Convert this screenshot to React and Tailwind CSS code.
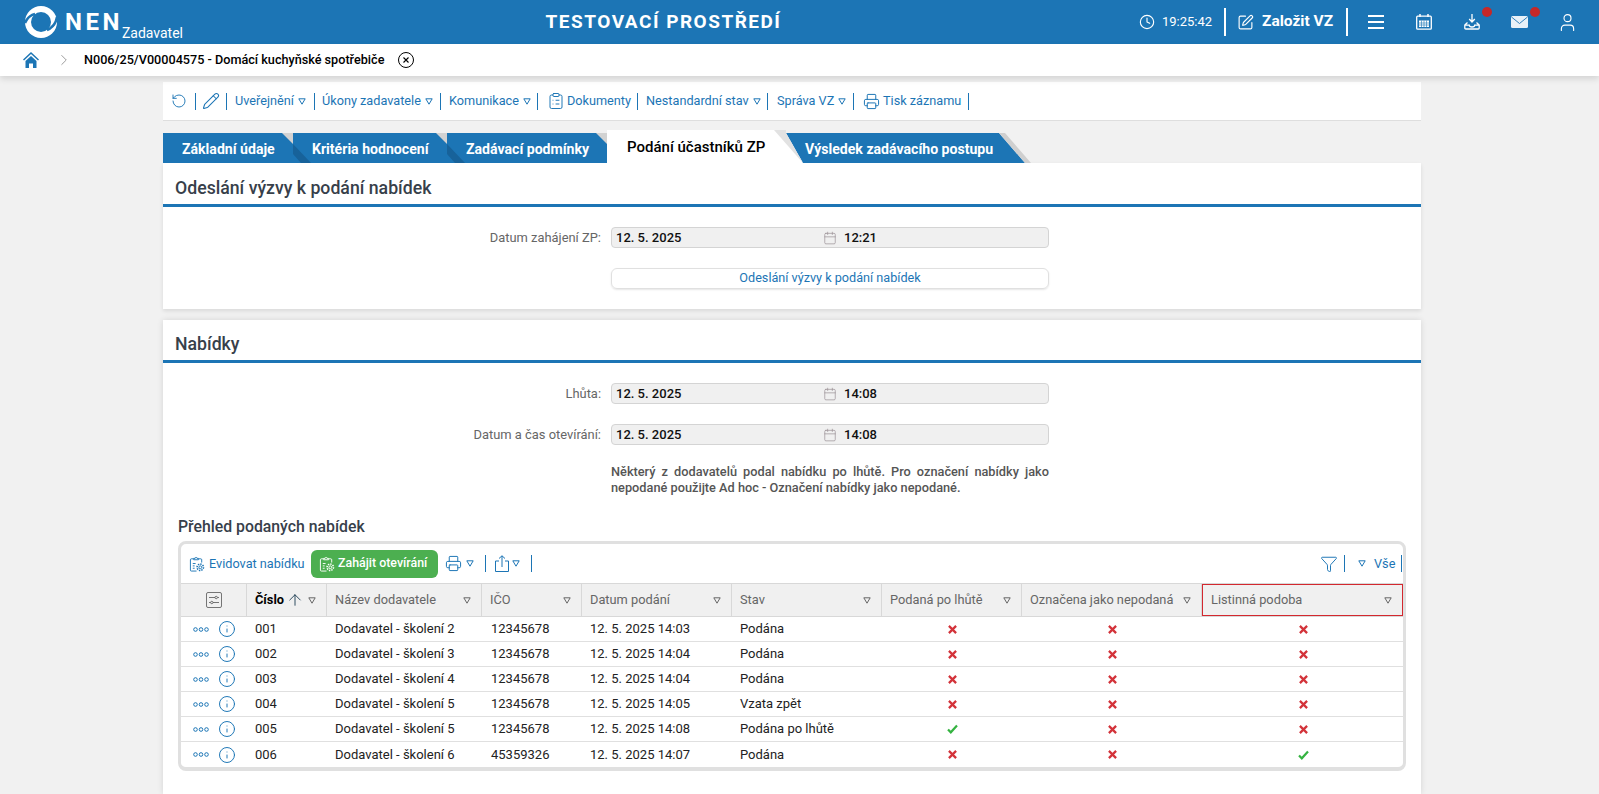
import { ArrowUp, Calendar, ChevronRight, ClipboardList, Clock, Filter, Info, Pencil, Printer, RotateCcw, SquarePen, User } from "lucide-react";

const blue = "text-[#1c75b5]";

const cols = [
  { label: "Číslo", w: "w-[80px]" },
  { label: "Název dodavatele", w: "w-[155px]" },
  { label: "IČO", w: "w-[100px]" },
  { label: "Datum podání", w: "w-[150px]" },
  { label: "Stav", w: "w-[150px]" },
  { label: "Podaná po lhůtě", w: "w-[140px]" },
  { label: "Označena jako nepodaná", w: "w-[180px]" },
  { label: "Listinná podoba", w: "flex-1" },
];

const rows = [
  ["001", "Dodavatel - školení 2", "12345678", "12. 5. 2025 14:03", "Podána", false, false, false],
  ["002", "Dodavatel - školení 3", "12345678", "12. 5. 2025 14:04", "Podána", false, false, false],
  ["003", "Dodavatel - školení 4", "12345678", "12. 5. 2025 14:04", "Podána", false, false, false],
  ["004", "Dodavatel - školení 5", "12345678", "12. 5. 2025 14:05", "Vzata zpět", false, false, false],
  ["005", "Dodavatel - školení 5", "12345678", "12. 5. 2025 14:08", "Podána po lhůtě", true, false, false],
  ["006", "Dodavatel - školení 6", "45359326", "12. 5. 2025 14:07", "Podána", false, false, true],
];

function Tri({ className = "text-[#1c75b5]" }) {
  return (
    <svg viewBox="0 0 8 7" className={`w-[8px] h-[7px] shrink-0 ${className}`} fill="none" stroke="currentColor" strokeWidth="1">
      <path d="M.8.8h6.400L4 6.200z" />
    </svg>
  );
}

function Sep({ className = "" }) {
  return <div className={`w-px h-[17px] bg-[#1c75b5] shrink-0 ${className}`} />;
}

function Logo() {
  return (
    <svg viewBox="0 0 32 32" className="w-[32px] h-[32px]">
      <circle cx="16" cy="16" r="16" fill="white" />
      <circle cx="16" cy="16" r="10" fill="#1c75b5" />
      <path d="M0 17C2 12 6 9 10 8" stroke="#1c75b5" strokeWidth="2.500" fill="none" />
      <path d="M32 11C31 17 27 22 22 24" stroke="#1c75b5" strokeWidth="2.500" fill="none" />
    </svg>
  );
}

function GearClipboard({ className }) {
  return (
    <svg viewBox="0 0 17 17" className={className} fill="none" stroke="currentColor" strokeWidth="1">
      <path d="M5 3H2.500a1 1 0 0 0-1 1v11a1 1 0 0 0 1 1H8M10 3h2.500a1 1 0 0 1 1 1v3" />
      <path d="M5 4V2.500h1.500a1 1 0 0 1 2 0H10V4z" />
      <path d="M4 8h3M4 10.500h2M4 13h2" />
      <circle cx="12" cy="12" r="1.500" />
      <circle cx="12" cy="12" r="3.400" strokeDasharray="1.500 1.100" strokeWidth="1.700" />
    </svg>
  );
}

function DateField({ date, time }) {
  return (
    <div className="w-[438px] h-[21px] bg-[#f0f0f0] border border-[#d4d4d4] rounded-[4px] flex items-center pl-[4px] text-[13px] font-medium text-[#111]">
      <span className="w-[207px]">{date}</span>
      <Calendar className="w-[14px] h-[14px] text-[#9a8f95]" strokeWidth={1.2} />
      <span className="ml-[7px]">{time}</span>
    </div>
  );
}

function FormRow({ label, date, time, className = "" }) {
  return (
    <div className={`flex items-center ${className}`}>
      <div className="w-[438px] mr-[10px] text-right text-[12.900px] text-[#666]">{label}</div>
      <DateField date={date} time={time} />
    </div>
  );
}

function SectionHead({ title, className }) {
  return (
    <div className={`${className} border-b-[3px] border-[#1c75b5] px-[12px] flex items-center text-[17.700px] font-medium text-[#37404a]`}>
      {title}
    </div>
  );
}

function Mark({ ok }) {
  if (ok) {
    return (
      <svg viewBox="0 0 11 10" className="w-[11px] h-[10px]" fill="none" stroke="#35b341" strokeWidth="2.200">
        <path d="M1 5.500 3.800 8.300 10 1.500" />
      </svg>
    );
  }
  return (
    <svg viewBox="0 0 10 10" className="w-[9px] h-[9px]" fill="none" stroke="#d3333a" strokeWidth="2.500">
      <path d="M1 1 9 9M9 1 1 9" />
    </svg>
  );
}

function BlueTab({ label, w, stripe = true }) {
  return (
    <div className={`${w} relative h-[30px] bg-[#1c75b5] flex items-center pl-[19px] pt-[3px] text-[14.100px] font-bold text-white whitespace-nowrap shrink-0`}>
      {label}
      <svg viewBox="0 0 29 30" className="absolute top-0 -right-[18px] w-[29px] h-[30px] z-10">
        <polygon points="0,0 11,0 11,11" fill="#d2d2d2" />
        {stripe && <polygon points="11,11 29,30 19,30 11,21" fill="#17629a" />}
      </svg>
    </div>
  );
}

function ActiveTab() {
  return (
    <div className="w-[179px] relative h-[33px] bg-white flex items-center pl-[20px] pt-[2px] text-[15px] font-medium text-black whitespace-nowrap shrink-0">
      Podání účastníků ZP
      <svg viewBox="0 0 29 33" className="absolute top-0 -right-[17px] w-[29px] h-[33px] z-10">
        <polygon points="12,3 29,33 12,33" fill="white" />
        <polygon points="0,0 12,0 12,3 29,33" fill="#e2e2e2" />
      </svg>
    </div>
  );
}

function LastTab() {
  return (
    <div className="w-[245px] relative h-[30px] shrink-0">
      <div className="w-[239px] h-[30px] bg-[#1c75b5] flex items-center pl-[19px] pt-[3px] pr-[30px] text-[14.100px] font-bold text-white whitespace-nowrap [clip-path:polygon(0_0,calc(100%-26px)_0,100%_100%,0_100%)]">
        Výsledek zadávacího postupu
      </div>
      <svg viewBox="0 0 32 30" className="absolute top-0 right-0 w-[32px] h-[30px]">
        <polygon points="0,0 6,0 32,30 26,30" fill="#cfcfcf" />
      </svg>
    </div>
  );
}

export default function App() {
  return (
    <div className="w-[1599px] h-[794px] overflow-hidden bg-[#f1f1f1] font-['Roboto',sans-serif]">
      <div className="h-[44px] bg-[#1c75b5] flex items-center text-white">
        <div className="flex items-center pl-[25px] w-[500px]">
          <Logo />
          <span className="ml-[8px] text-[24px] font-bold tracking-[3.500px] leading-none">NEN</span>
          <span className="text-[14px] mt-[22px] -ml-[1px] leading-none">Zadavatel</span>
        </div>
        <div className="w-[327px] text-center text-[19px] font-bold tracking-[1.500px] whitespace-nowrap">TESTOVACÍ PROSTŘEDÍ</div>
        <div className="ml-auto flex items-center h-full">
          <Clock className="w-[16px] h-[16px]" strokeWidth={1.7} />
          <span className="ml-[7px] text-[13px] w-[50px] whitespace-nowrap">19:25:42</span>
          <div className="w-[2px] h-[28px] bg-white ml-[12px]" />
          <SquarePen className="w-[17px] h-[17px] ml-[11px]" strokeWidth={1.6} />
          <span className="ml-[8px] text-[15.500px] font-bold w-[72px] whitespace-nowrap">Založit VZ</span>
          <div className="w-[2px] h-[28px] bg-white ml-[12px]" />
          <div className="w-[16px] ml-[20px] flex flex-col gap-[4px]">
            <div className="h-[2px] bg-white" />
            <div className="h-[2px] bg-white" />
            <div className="h-[2px] bg-white" />
          </div>
          <svg viewBox="0 0 16 16" className="w-[16px] h-[16px] ml-[32px]" fill="none" stroke="white">
            <rect x="0.700" y="2.200" width="14.600" height="13" rx="1" strokeWidth="1.300" />
            <path d="M4 0v3M12 0v3" strokeWidth="1.500" />
            <path d="M3 6.500h10v6.500H3z" fill="white" stroke="none" />
            <path d="M3 9h10M3 11h10M5.500 6.500v6.500M8 6.500v6.500M10.500 6.500v6.500" stroke="#1c75b5" strokeWidth="0.600" />
          </svg>
          <div className="relative ml-[32px]">
            <svg viewBox="0 0 16 16" className="w-[16px] h-[16px]" fill="none" stroke="white" strokeWidth="1.300">
              <path d="M8 0v7.500M5.200 5 8 8l2.800-3" />
              <path d="M3.500 8.500 .8 11v3a1 1 0 0 0 1 1h12.400a1 1 0 0 0 1-1v-3l-2.700-2.500M.8 11.200h4.500a2.700 1.800 0 0 0 5.400 0h4.500" />
            </svg>
            <div className="absolute -top-[7px] left-[18px] w-[10px] h-[10px] rounded-full bg-[#c62828]" />
          </div>
          <div className="relative ml-[31px]">
            <svg viewBox="0 0 17 12" className="w-[17px] h-[12px]">
              <rect width="17" height="12" rx="1.500" fill="#e8f1f8" />
              <path d="M.5 1 8.500 7.500 16.500 1" fill="none" stroke="#1c75b5" strokeWidth="0.900" />
            </svg>
            <div className="absolute -top-[9px] left-[19px] w-[10px] h-[10px] rounded-full bg-[#c62828]" />
          </div>
          <User className="w-[21px] h-[21px] ml-[29px] mr-[21px]" strokeWidth={1.3} />
        </div>
      </div>

      <div className="h-[32px] bg-white shadow-[0_3px_6px_rgba(0,0,0,0.12)] flex items-center relative">
        <svg viewBox="0 0 16 16" className="w-[16px] h-[16px] ml-[23px] text-[#1c75b5]" fill="currentColor">
          <path d="M8 0 0 7.500l1 1L8 2l7 6.500 1-1zM2.500 9 8 4l5.500 5v7H10v-4.500H6V16H2.500z" />
        </svg>
        <ChevronRight className="w-[18px] h-[18px] ml-[16px] text-[#888]" strokeWidth={1.1} />
        <span className="ml-[11px] w-[301px] text-[12.650px] font-medium text-black whitespace-nowrap">N006/25/V00004575 - Domácí kuchyňské spotřebiče</span>
        <div className="ml-[13px] w-[16px] h-[16px] rounded-full border border-black flex items-center justify-center">
          <svg viewBox="0 0 6 6" className="w-[6px] h-[6px]" stroke="black" strokeWidth="1.100">
            <path d="M.5.5l5 5M5.500.5l-5 5" />
          </svg>
        </div>
      </div>

      <div className="w-[1258px] ml-[163px] mt-[6px]">
        <div className={`h-[39px] bg-white border-b border-[#dedede] flex items-center pl-[8px] text-[12.700px] ${blue} whitespace-nowrap`}>
          <RotateCcw className="w-[16px] h-[16px]" strokeWidth={1.4} />
          <Sep className="ml-[8px]" />
          <Pencil className="w-[18px] h-[18px] ml-[6px]" strokeWidth={1.4} />
          <Sep className="ml-[6px]" />
          <span className="ml-[8px] w-[59px]">Uveřejnění</span>
          <div className="ml-[4px]"><Tri /></div>
          <Sep className="ml-[8px]" />
          <span className="ml-[7px] w-[98px]">Úkony zadavatele</span>
          <div className="ml-[5px]"><Tri /></div>
          <Sep className="ml-[7px]" />
          <span className="ml-[8px] w-[70px]">Komunikace</span>
          <div className="ml-[4px]"><Tri /></div>
          <Sep className="ml-[6px]" />
          <ClipboardList className="w-[18px] h-[18px] ml-[9px]" strokeWidth={1.3} />
          <span className="ml-[2px] w-[64px]">Dokumenty</span>
          <Sep className="ml-[6px]" />
          <span className="ml-[8px] w-[103px]">Nestandardní stav</span>
          <div className="ml-[4px]"><Tri /></div>
          <Sep className="ml-[6px]" />
          <span className="ml-[9px] w-[58px]">Správa VZ</span>
          <div className="ml-[3px]"><Tri /></div>
          <Sep className="ml-[7px]" />
          <Printer className="w-[17px] h-[17px] ml-[9px]" strokeWidth={1.4} />
          <span className="ml-[3px] w-[78px]">Tisk záznamu</span>
          <Sep className="ml-[7px]" />
        </div>

        <div className="flex mt-[9px] h-[33px] items-end">
          <BlueTab label="Základní údaje" w="w-[130px]" />
          <BlueTab label="Kritéria hodnocení" w="w-[154px]" />
          <BlueTab label="Zadávací podmínky" w="w-[160px]" stripe={false} />
          <ActiveTab />
          <LastTab />
        </div>

        <div className="bg-white h-[146px] shadow-[0_2px_4px_rgba(0,0,0,0.1)]">
          <SectionHead title="Odeslání výzvy k podání nabídek" className="h-[44px] pt-[9px]" />
          <FormRow label="Datum zahájení ZP:" date="12. 5. 2025" time="12:21" className="mt-[20px]" />
          <div className={`ml-[448px] mt-[20px] w-[438px] h-[21px] border border-[#e0e0e0] rounded-[6px] shadow-[0_1px_2px_rgba(0,0,0,0.1)] flex items-center justify-center text-[12.650px] ${blue}`}>
            Odeslání výzvy k podání nabídek
          </div>
        </div>

        <div className="bg-white mt-[11px] h-[474px] shadow-[0_0_6px_rgba(0,0,0,0.12)]">
          <SectionHead title="Nabídky" className="h-[43px] pt-[8px]" />
          <FormRow label="Lhůta:" date="12. 5. 2025" time="14:08" className="mt-[20px]" />
          <FormRow label="Datum a čas otevírání:" date="12. 5. 2025" time="14:08" className="mt-[20px]" />
          <p className="ml-[448px] mt-[19px] w-[438px] text-[12.750px] leading-[15.500px] font-medium text-[#555] text-justify">
            Některý z dodavatelů podal nabídku po lhůtě. Pro označení nabídky jako nepodané použijte Ad hoc - Označení nabídky jako nepodané.
          </p>
          <div className="ml-[15px] mt-[23px] text-[15.800px] font-medium text-[#37404a] leading-[18px]">Přehled podaných nabídek</div>
          <div className="ml-[15px] mt-[5px] w-[1228px] border-[3px] border-b-[4px] border-[#e0e0e0] rounded-[8px] overflow-hidden">
            <div className={`h-[39px] flex items-center pl-[8px] text-[12.700px] ${blue} whitespace-nowrap`}>
              <GearClipboard className="w-[16px] h-[16px]" />
              <span className="ml-[4px] w-[95px]">Evidovat nabídku</span>
              <div className="w-[127px] h-[28px] ml-[7px] bg-[#4caf50] text-white rounded-[6px] flex items-center pl-[8px] font-medium text-[12.400px]">
                <GearClipboard className="w-[16px] h-[16px] mr-[3px]" />
                Zahájit otevírání
              </div>
              <Printer className="w-[17px] h-[17px] ml-[7px]" strokeWidth={1.4} />
              <div className="ml-[4px]"><Tri /></div>
              <Sep className="ml-[11px]" />
              <svg viewBox="0 0 14 17" className="w-[14px] h-[17px] ml-[9px]" fill="none" stroke="currentColor" strokeWidth="1">
                <path d="M4 6H.5v10.500h13V6H10" />
                <path d="M7 12V.8M4 3.500 7 .8l3 2.700" />
              </svg>
              <div className="ml-[3px]"><Tri /></div>
              <Sep className="ml-[11px]" />
              <Filter className="w-[18px] h-[18px] ml-auto" strokeWidth={1.3} />
              <Sep className="ml-[6px]" />
              <div className="ml-[13px]"><Tri /></div>
              <span className="ml-[8px] w-[21px]">Vše</span>
              <Sep className="ml-[6px] mr-px" />
            </div>
            <div className="flex h-[34px] bg-[#f0f0f0] border-y border-[#d8d8d8] text-[12.800px] text-[#666] whitespace-nowrap">
              <div className="w-[66px] border-r border-[#d8d8d8] flex items-center justify-center">
                <svg viewBox="0 0 16 16" className="w-[16px] h-[16px] text-[#555]" fill="none" stroke="currentColor" strokeWidth="0.800">
                  <rect x="0.500" y="0.500" width="15" height="15" rx="1.500" />
                  <path d="M3 5.500h6M11.500 5.500H13M3 10.500h1.500M7 10.500h6" />
                  <circle cx="10.200" cy="5.500" r="1.200" />
                  <circle cx="5.800" cy="10.500" r="1.200" />
                </svg>
              </div>
              {cols.map((c, i) => (
                <div
                  key={c.label}
                  className={`${c.w} flex items-center pl-[8px] pr-[10px] ${i === 7 ? "border border-[#d3282f]" : "border-r border-[#d8d8d8]"} ${i === 0 ? "font-bold text-black" : ""}`}
                >
                  <span>{c.label}</span>
                  {i === 0 && <ArrowUp className="w-[18px] h-[18px] ml-[2px] text-[#1a3a50]" strokeWidth={1.2} />}
                  <Tri className="ml-auto text-[#666]" />
                </div>
              ))}
            </div>
            {rows.map((r) => (
              <div key={r[0]} className="flex h-[25px] border-b border-[#e0e0e0] last:border-b-0 text-[13px] text-[#222] items-center">
                <div className="w-[66px] flex items-center pl-[12px]">
                  <svg viewBox="0 0 16 5" className={`w-[16px] h-[5px] ${blue}`} fill="none" stroke="currentColor" strokeWidth="1">
                    <circle cx="2.500" cy="2.500" r="1.800" />
                    <circle cx="8" cy="2.500" r="1.800" />
                    <circle cx="13.500" cy="2.500" r="1.800" />
                  </svg>
                  <Info className={`w-[18px] h-[18px] ml-[9px] ${blue}`} strokeWidth={1.3} />
                </div>
                <div className="w-[80px] pl-[8px]">{r[0]}</div>
                <div className="w-[155px] pl-[8px]">{r[1]}</div>
                <div className="w-[100px] pl-[9px]">{r[2]}</div>
                <div className="w-[150px] pl-[8px]">{r[3]}</div>
                <div className="w-[150px] pl-[8px]">{r[4]}</div>
                <div className="w-[140px] flex justify-center"><Mark ok={r[5]} /></div>
                <div className="w-[180px] flex justify-center"><Mark ok={r[6]} /></div>
                <div className="flex-1 flex justify-center pl-[2px]"><Mark ok={r[7]} /></div>
              </div>
            ))}
          </div>
        </div>
      </div>
    </div>
  );
}
